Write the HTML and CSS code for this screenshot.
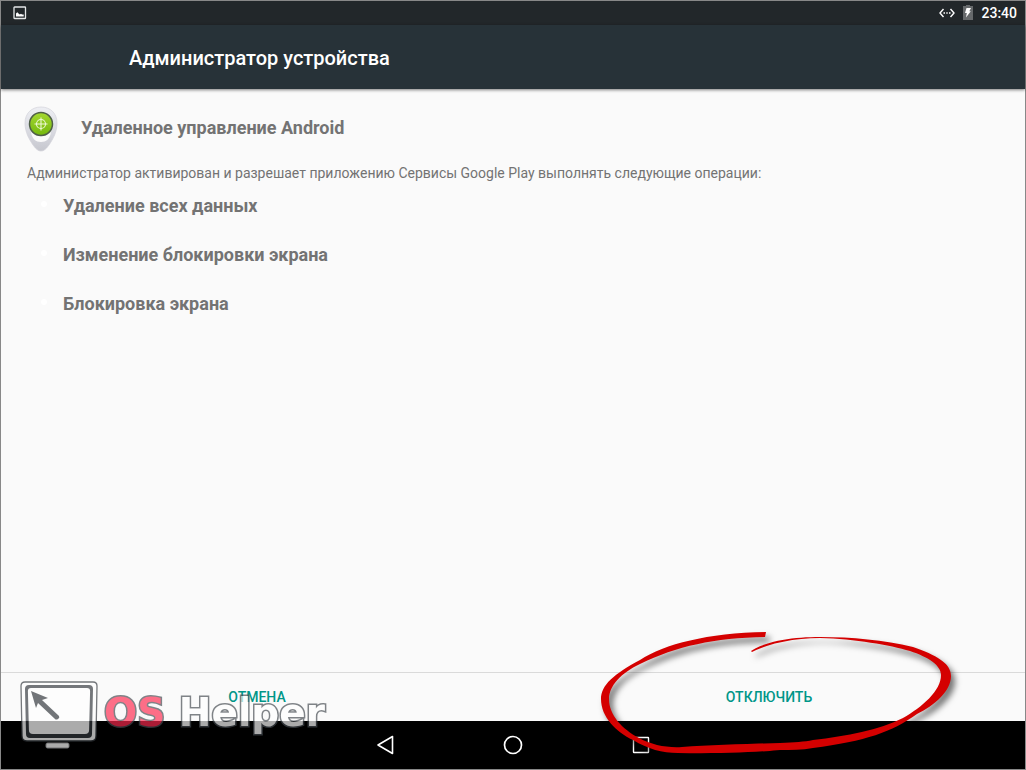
FILE: index.html
```html
<!DOCTYPE html>
<html lang="ru">
<head>
<meta charset="utf-8">
<title>Администратор устройства</title>
<link rel="stylesheet" href="styles.css">
</head>
<body>
<div class="screen">
  <div class="status-bar">
    <svg class="status-picture" width="14" height="14" viewBox="0 0 14 14" aria-hidden="true">
      <rect x="1" y="1" width="11.500" height="11.500" rx=".6" fill="none" stroke="#e4e6e7" stroke-width="1.300"/>
      <path d="M3 10.500V7.500l1.300-1.200 1.500 1.500 1 .7 1.200-.8 1 .8h1.700v2z" fill="#fff"/>
    </svg>
    <div class="status-right">
      <svg width="16" height="10" viewBox="0 0 16 10" aria-hidden="true">
        <path d="M4.500 1 1 5l3.500 4M11.500 1 15 5l-3.500 4" fill="none" stroke="#fff" stroke-width="1.400"/>
        <path d="M4.500 4.300H6v1.400H4.500zM7.300 4.300h1.400v1.400H7.300zM10 4.300h1.500v1.400H10z" fill="#fff"/>
      </svg>
      <svg width="10" height="16" viewBox="0 0 10 16" aria-hidden="true">
        <path d="M3 0h4v1h3v14H0V1h3z" fill="#66696b"/>
        <path d="M3.500 3H8L6.300 6.300h1.500L3 12.500l.8-4.500H2z" fill="#fff"/>
      </svg>
      <time class="clock">23:40</time>
    </div>
  </div>
  <header class="app-bar"><h1 class="title">Администратор устройства</h1></header>
  <main class="content">
    <div class="admin">
      <svg width="34" height="46" viewBox="0 0 34 46" aria-hidden="true">
        <defs>
          <linearGradient id="pin" x1="0" y1="0" x2="0" y2="1"><stop offset="0" stop-color="#eeeff4"/><stop offset=".6" stop-color="#d7d8df"/><stop offset="1" stop-color="#c6c7ce"/></linearGradient>
          <linearGradient id="lens" x1="0" y1="0" x2="0" y2="1"><stop offset="0" stop-color="#a5d832"/><stop offset="1" stop-color="#74b80c"/></linearGradient>
        </defs>
        <path d="M17 1C8 1 1 7 1 17c0 9 4 16 8 22 3 4 5 6 8 6s5-2 8-6c4-6 8-13 8-22C33 7 26 1 17 1z" fill="url(#pin)" stroke="#d2d3da" stroke-width=".7"/>
        <path d="M7 26a14 14 0 0 0 20 0c-1 7-5 10-10 10S8 33 7 26z" fill="#fafafa"/>
        <circle cx="17" cy="18" r="11.500" fill="url(#lens)" stroke="#4f5f47" stroke-width="1.500"/>
        <g fill="none" stroke="#edf8d5" stroke-width="1.100"><circle cx="17" cy="18" r="4.500"/><path d="M17 11.500v13M10.500 18h13"/></g>
      </svg>
      <h2 class="admin-name">Удаленное управление Android</h2>
    </div>
    <p class="note">Администратор активирован и разрешает приложению Сервисы Google Play выполнять следующие операции:</p>
    <ul class="policies">
      <li class="policy">Удаление всех данных</li>
      <li class="policy">Изменение блокировки экрана</li>
      <li class="policy">Блокировка экрана</li>
    </ul>
  </main>
  <footer class="actions">
    <button class="action" type="button">ОТМЕНА</button>
    <button class="action" type="button">ОТКЛЮЧИТЬ</button>
  </footer>
  <nav class="nav-bar" aria-label="Навигация">
    <button class="nav-button" type="button" aria-label="Назад"><svg width="20" height="20" viewBox="0 0 20 20"><path d="M17.500 1.500v17L3 10z" fill="none" stroke="#fff" stroke-width="1.600" stroke-linejoin="round"/></svg></button>
    <button class="nav-button" type="button" aria-label="Домой"><svg width="20" height="20" viewBox="0 0 20 20"><circle cx="10" cy="10" r="8.500" fill="none" stroke="#fff" stroke-width="1.700"/></svg></button>
    <button class="nav-button" type="button" aria-label="Обзор"><svg width="20" height="20" viewBox="0 0 20 20"><rect x="2.500" y="2.500" width="15" height="15" rx=".5" fill="none" stroke="#fff" stroke-width="1.400"/></svg></button>
  </nav>
  <div class="watermark">
    <svg width="78" height="68" viewBox="0 0 78 68" aria-hidden="true">
      <path d="M5 1h68q4 0 4 4l-1 50q0 5-5 5H7q-5 0-5-5L1 5q0-4 4-4z" fill="#fff" stroke="#33383d" stroke-width="1.300"/>
      <path d="M9 4h60q4 0 4 4l-1 45q0 4-4 4H10q-4 0-4-4L5 8q0-4 4-4z" fill="#33383d"/>
      <path d="M11 6h56q4 0 4 4l-1 39q0 5-5 5H13q-5 0-5-5L7 10q0-4 4-4z" fill="#fff" stroke="#33383d" stroke-width="1.800"/>
      <path d="m11 10 17 7-6 2 17 16q1 2-1 3t-3 0L18 22l-2 5z" fill="#30353a"/>
      <rect x="26" y="62" width="23" height="5" rx="1.500" fill="#fff" stroke="#a5a7a9"/>
    </svg>
    <span class="brand"><span class="brand-os">OS</span> Helper</span>
  </div>
  <svg class="marker" width="380" height="145" viewBox="0 0 380 145" aria-hidden="true">
    <path fill="#d40000" d="M161 30C178 19 205 16 230 16C262 16 294 19 323 26C346 34 361 42 361 55C361 70 345 84 327 93C302 111 276 120 223 127C212 129 201 129 190 129L190 122C205 121 214 121 223 119C257 115 289 109 313 97C332 86 351 70 351 54C351 44 338 36 320 30C300 24 265 18 230 17C205 17 180 22 162 31z"/>
    <path fill="#d40000" d="M176 11C117 12 75 23 50 39C24 53 11 64 11 78C11 96 26 111 43 119C58 128 72 132 88 132C130 133 170 131 190 129L190 122C157 123 120 124 92 126C77 127 62 124 49 117C32 108 19 94 19 78C19 65 31 52 50 43C87 25 124 17 175 16z"/>
  </svg>
</div>
</body>
</html>
```
FILE: styles.css
```css
* { box-sizing: border-box; }
body {
  margin: 0;
  font-family: Roboto, "Noto Sans", sans-serif;
  background: #fafafa;
}
.screen {
  position: relative;
  display: flex;
  flex-direction: column;
  min-height: 100vh;
  border: 1px solid #888;
}
.status-bar {
  display: flex;
  align-items: center;
  justify-content: space-between;
  height: 24px;
  padding: 0 8px 0 12px;
  background: #22272a;
  color: #fff;
}
.status-right { display: flex; align-items: center; gap: 8px; }
.clock { font-size: 14px; line-height: 24px; font-weight: 500; }
.app-bar {
  display: flex;
  align-items: center;
  height: 64px;
  padding: 2px 128px 0;
  background: #273238;
  box-shadow: 0 1px 3px rgba(0, 0, 0, .5);
}
.title { margin: 0; color: #fff; font-size: 20px; line-height: 28px; font-weight: 500; }
.content { flex: 1; padding: 17px 23px; color: #737373; }
.admin { display: flex; align-items: center; gap: 23px; }
.admin-name { margin: 0; padding-bottom: 2px; font-size: 18px; line-height: 24px; font-weight: 700; }
.note { margin: 11px 0 0; padding-left: 3px; font-size: 14px; line-height: 20px; }
.policies {
  display: flex;
  flex-direction: column;
  gap: 25px;
  margin: 11px 0 0;
  padding: 0 0 0 17px;
  list-style: none;
}
.policy { display: flex; font-size: 18px; line-height: 24px; font-weight: 700; }
.policy::before {
  content: "";
  width: 6px;
  height: 6px;
  margin: 7px 16px 0 0;
  border-radius: 50%;
  background: #fff;
}
.actions { display: flex; height: 49px; border-top: 1px solid #dadada; }
.action {
  flex: 1;
  border: 0;
  padding: 0;
  background: none;
  color: #009688;
  font: 500 14px/20px Roboto, sans-serif;
}
.nav-bar { display: flex; justify-content: center; height: 48px; background: #000; }
.nav-button {
  display: flex;
  align-items: center;
  justify-content: center;
  width: 128px;
  padding: 0;
  border: 0;
  background: none;
}
.watermark {
  position: absolute;
  left: 19px;
  bottom: 20px;
  display: flex;
  align-items: center;
  gap: 6px;
  opacity: .67;
  pointer-events: none;
}
.brand {
  padding-bottom: 4px;
  color: #fff;
  font: 700 39px/44px "DejaVu Sans", sans-serif;
  white-space: nowrap;
  -webkit-text-stroke: 3px #444a50;
  paint-order: stroke fill;
}
.brand-os { color: #ff2a50; }
.marker {
  position: absolute;
  right: 55px;
  bottom: 3px;
  overflow: visible;
  filter: drop-shadow(4px 5px 3px rgba(0, 0, 0, .55));
  pointer-events: none;
}
```
